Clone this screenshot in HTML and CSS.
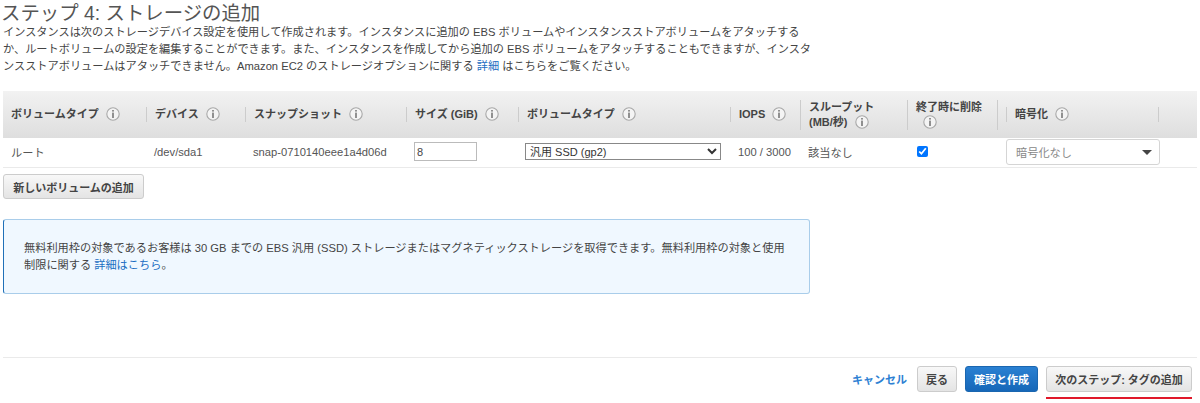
FILE: index.html
```html
<!DOCTYPE html>
<html lang="ja">
<head>
<meta charset="utf-8">
<title>ステップ 4: ストレージの追加</title>
<link rel="stylesheet" href="styles.css">
</head>
<body>
<svg class="defs" width="0" height="0" aria-hidden="true">
  <symbol id="info" viewBox="0 0 14 14">
    <circle cx="7" cy="7" r="6.2" fill="#f4f4f4" stroke="#a8a8a8" stroke-width="1.1"/>
    <rect x="6.3" y="3" width="1.4" height="1.6" fill="#666"/>
    <rect x="6.3" y="5.6" width="1.4" height="5.4" fill="#666"/>
  </symbol>
</svg>
<main class="page">
  <h1 class="title">ステップ 4: ストレージの追加</h1>
  <p class="desc">インスタンスは次のストレージデバイス設定を使用して作成されます。インスタンスに追加の EBS ボリュームやインスタンスストアボリュームをアタッチする<br>か、ルートボリュームの設定を編集することができます。また、インスタンスを作成してから追加の EBS ボリュームをアタッチすることもできますが、インスタ<br>ンスストアボリュームはアタッチできません。Amazon EC2 のストレージオプションに関する <a href="#">詳細</a> はこちらをご覧ください。</p>

  <table class="vol">
    <colgroup>
      <col class="c1"><col class="c2"><col class="c3"><col class="c4"><col class="c5"><col class="c6"><col class="c7"><col class="c8"><col class="c9">
    </colgroup>
    <thead>
      <tr>
        <th><div class="th first">ボリュームタイプ<svg class="i"><use href="#info"/></svg></div></th>
        <th><div class="th">デバイス<svg class="i"><use href="#info"/></svg></div></th>
        <th><div class="th">スナップショット<svg class="i"><use href="#info"/></svg></div></th>
        <th><div class="th">サイズ (GiB)<svg class="i"><use href="#info"/></svg></div></th>
        <th><div class="th">ボリュームタイプ<svg class="i"><use href="#info"/></svg></div></th>
        <th><div class="th">IOPS<svg class="i"><use href="#info"/></svg></div></th>
        <th><div class="th">スループット<br>(MB/秒)<svg class="i"><use href="#info"/></svg></div></th>
        <th><div class="th del">終了時に削除<br><svg class="i solo"><use href="#info"/></svg></div></th>
        <th><div class="th enc">暗号化<svg class="i"><use href="#info"/></svg></div></th>
      </tr>
    </thead>
    <tbody>
      <tr>
        <td>ルート</td>
        <td>/dev/sda1</td>
        <td>snap-0710140eee1a4d06d</td>
        <td><input class="size" type="text" value="8"></td>
        <td><select class="type"><option>汎用 SSD (gp2)</option></select></td>
        <td>100 / 3000</td>
        <td>該当なし</td>
        <td><input class="check" type="checkbox" checked></td>
        <td><div class="dd">暗号化なし<span class="caret"></span></div></td>
      </tr>
    </tbody>
  </table>

  <button class="btn add" type="button">新しいボリュームの追加</button>

  <div class="notice">
    <p>無料利用枠の対象であるお客様は 30 GB までの EBS 汎用 (SSD) ストレージまたはマグネティックストレージを取得できます。無料利用枠の対象と使用<br>制限に関する <a href="#">詳細はこちら</a>。</p>
  </div>

  <footer class="foot">
    <a class="cancel" href="#">キャンセル</a>
    <button class="btn" type="button">戻る</button>
    <button class="btn primary" type="button">確認と作成</button>
    <button class="btn next" type="button">次のステップ: タグの追加</button>
  </footer>
</main>
</body>
</html>
```
FILE: styles.css
```css
* { box-sizing: border-box; }
html, body { margin: 0; padding: 0; background: #fff; }
body {
  font-family: "Liberation Sans", "Noto Sans CJK JP", sans-serif;
  font-size: 11px;
  color: #444;
  overflow: hidden;
}
a { color: #1b6ec2; text-decoration: none; }
.defs { position: absolute; }
.page { width: 1200px; height: 403px; padding: 2px 3px 0; }
.title { margin: 0 0 0 -2px; font-size: 19.4px; line-height: 22px; font-weight: 400; color: #555; }
.desc { margin: 0 0 16px; font-size: 11.2px; line-height: 17px; color: #444; white-space: nowrap; }

.vol { width: 1194px; table-layout: fixed; border-collapse: collapse; }
.c1 { width: 143px; } .c2 { width: 99px; } .c3 { width: 161px; } .c4 { width: 112px; }
.c5 { width: 212px; } .c6 { width: 70px; } .c7 { width: 107px; } .c8 { width: 91px; } .c9 { width: 199px; }
.vol th {
  height: 47px; padding: 0; text-align: left; vertical-align: middle;
  background: linear-gradient(#f2f2f2, #dedede);
  font-weight: 700; color: #444; line-height: 15px;
}
.th { border-left: 1px solid #ccc; padding-left: 8px; white-space: nowrap; }
.th.first { border-left: 0; }
.th.del { border-right: 1px solid #ccc; }
.th.enc { margin-left: 8px; width: 153px; border-right: 1px solid #ccc; }
.i { width: 14px; height: 14px; margin-left: 7px; vertical-align: -3px; }
.i.solo { margin-left: 7px; }
.vol td { height: 29px; padding: 0 0 2px 8px; border-bottom: 1px solid #eaeaea; font-size: 11.2px; color: #555; vertical-align: middle; white-space: nowrap; }
.size { display: block; width: 63px; height: 19px; padding: 0 2px; border: 1px solid #bbb; font: 11px "Liberation Sans", sans-serif; color: #444; }
.type { display: block; width: 196px; height: 17px; margin-left: -1px; padding: 0; border: 1px solid #888; background: #fff; font: 11px "Liberation Sans", "Noto Sans CJK JP", sans-serif; color: #333; }
.check { display: block; width: 11px; height: 11px; margin: 0 0 0 2px; }
.dd {
  display: flex; align-items: center; justify-content: space-between;
  width: 154px; height: 26px; padding: 0 7px 0 9px; margin-top: 1px;
  border: 1px solid #d5d5d5; border-radius: 3px; color: #888;
}
.caret { width: 0; height: 0; border-left: 5px solid transparent; border-right: 5px solid transparent; border-top: 5px solid #444; }

.btn {
  height: 26px; padding: 0 8px;
  border: 1px solid #ccc; border-radius: 3px;
  background: linear-gradient(#f8f8f8, #e4e4e4);
  font: 700 11px "Liberation Sans", "Noto Sans CJK JP", sans-serif; color: #444;
  white-space: nowrap;
}
.add { display: block; width: 141px; height: 25px; margin-top: 6px; padding: 0; }

.notice {
  width: 807px; height: 75px; margin-top: 20px; padding: 20px 20px 0;
  background: #f0f8ff; border: 1px solid #a9cdea; border-left-color: #1f70b8; border-radius: 3px;
}
.notice p { margin: 0; font-size: 11.2px; line-height: 17px; color: #444; white-space: nowrap; }

.foot {
  display: flex; align-items: center; justify-content: flex-end; gap: 8px;
  margin-top: 63px; padding: 8px 5px 0 0; border-top: 1px solid #eaeaea;
}
.cancel { font-weight: 700; color: #2d7fd3; margin-right: 2px; }
.primary { width: 73px; padding: 0; border-color: #1a66b0; background: linear-gradient(#2a80d2, #1667b8); color: #fff; }
.next { position: relative; width: 146px; padding: 0; }
.next::after { content: ""; position: absolute; left: -1px; right: -1px; top: 30px; height: 2px; background: #e0182a; }
```
